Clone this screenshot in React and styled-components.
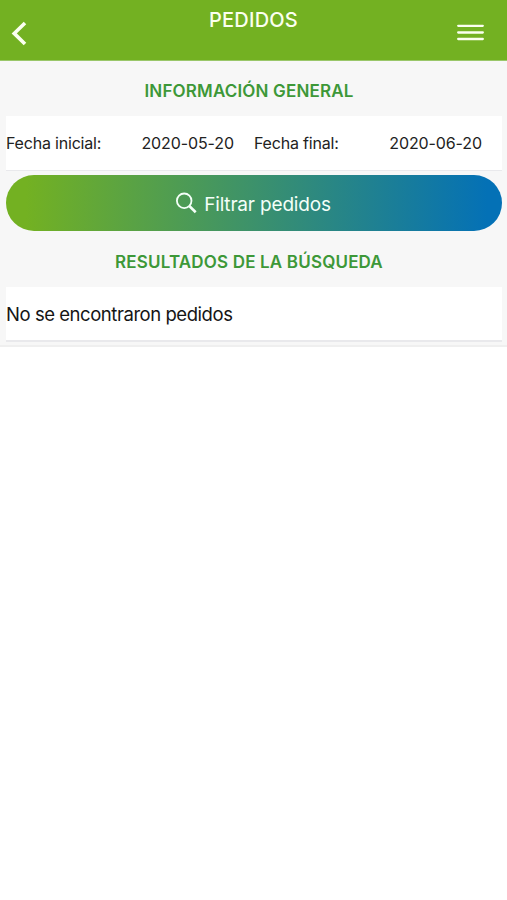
import React from "react";
import styled, { createGlobalStyle } from "styled-components";

const GlobalStyle = createGlobalStyle`
  * { box-sizing: border-box; }
  body {
    margin: 0;
    background: #fff;
    font-family: Inter, Roboto, "Liberation Sans", sans-serif;
  }
`;

const Screen = styled.div`
  min-height: 900px;
  background: #fff;
`;

const Header = styled.header`
  display: grid;
  grid-template-columns: 60px 1fr 60px;
  height: 61px;
  background: #73b122;
  border-bottom: 1px solid #9ac76a;
`;

const Title = styled.h1`
  margin: 0;
  padding-top: 8px;
  text-align: center;
  color: #fbfff0;
  font-size: 20px;
  line-height: 25px;
  font-weight: 500;
  letter-spacing: 0.2px;
`;

const IconButton = styled.button`
  display: flex;
  align-items: flex-start;
  justify-content: ${(p) => (p.$end ? "flex-end" : "flex-start")};
  padding: ${(p) => (p.$end ? "23px 23.5px 0 0" : "20px 0 0 10px")};
  border: 0;
  background: none;
  color: #fbfff0;
`;

const Content = styled.main`
  height: 286px;
  padding: 0 5px 0 6px;
  background: #f7f7f7;
  border-bottom: 2px solid #efefef;
`;

const SectionTitle = styled.h2`
  display: flex;
  align-items: center;
  justify-content: center;
  height: ${(p) => p.$height}px;
  margin: 0;
  padding: 5px 10px 0 0;
  color: #3d9838;
  font-size: 17px;
  line-height: 22px;
  font-weight: 600;
  letter-spacing: 0.17px;
`;

const Row = styled.div`
  display: grid;
  grid-template-columns: ${(p) => (p.$columns ? "1fr 1fr" : "1fr")};
  align-items: center;
  height: 55px;
  background: #fff;
  border-bottom: ${(p) => (p.$columns ? 1 : 2)}px solid #e9e9ec;
`;

const Field = styled.div`
  display: flex;
  justify-content: space-between;
  padding-right: 20px;
  color: #222;
  font-size: 16px;
  line-height: 22px;
`;

const Label = styled.span`
  letter-spacing: -0.2px;
`;

const DateValue = styled.span`
  letter-spacing: -0.1px;
`;

const FilterButton = styled.button`
  display: flex;
  align-items: center;
  justify-content: center;
  gap: 7px;
  width: 100%;
  height: 56px;
  margin: 4px 0 0;
  padding: 0 1px 0 0;
  border: 0;
  border-radius: 28px;
  background: linear-gradient(90deg, #73b122 4%, #0471b6 97%);
  color: #f4fff8;
  font-family: inherit;
  font-size: 19px;
  line-height: 26px;
`;

const ButtonText = styled.span`
  padding-top: 3px;
  letter-spacing: -0.17px;
`;

const Message = styled.p`
  margin: 0;
  color: #151515;
  font-size: 18.5px;
  line-height: 26px;
  letter-spacing: -0.45px;
`;

function BackIcon() {
  return (
    <svg width="18" height="27" viewBox="0 0 18 27" fill="none">
      <path d="M15 3L4.2 13.4L15 24" stroke="currentColor" strokeWidth="3.6" />
    </svg>
  );
}

function MenuIcon() {
  return (
    <svg width="27" height="20" viewBox="0 0 27 20" fill="none">
      <path d="M1.2 2.8H25.8M1.2 9.5H25.8M1.2 16H25.8" stroke="currentColor" strokeWidth="2.3" strokeLinecap="round" />
    </svg>
  );
}

function SearchIcon() {
  return (
    <svg width="21" height="22" viewBox="0 0 21 22" fill="none">
      <circle cx="8.2" cy="8.8" r="7.3" stroke="currentColor" strokeWidth="1.8" />
      <path d="M13.3 14L19.7 20.2" stroke="currentColor" strokeWidth="2.6" />
    </svg>
  );
}

export default function App() {
  return (
    <>
      <GlobalStyle />
      <Screen>
        <Header>
          <IconButton aria-label="Volver"><BackIcon /></IconButton>
          <Title>PEDIDOS</Title>
          <IconButton $end aria-label="Menú"><MenuIcon /></IconButton>
        </Header>
        <Content>
          <SectionTitle $height={55}>INFORMACIÓN GENERAL</SectionTitle>
          <Row $columns>
            <Field><Label>Fecha inicial:</Label><DateValue>2020-05-20</DateValue></Field>
            <Field><Label>Fecha final:</Label><DateValue>2020-06-20</DateValue></Field>
          </Row>
          <FilterButton><SearchIcon /><ButtonText>Filtrar pedidos</ButtonText></FilterButton>
          <SectionTitle $height={56}>RESULTADOS DE LA BÚSQUEDA</SectionTitle>
          <Row><Message>No se encontraron pedidos</Message></Row>
        </Content>
      </Screen>
    </>
  );
}
